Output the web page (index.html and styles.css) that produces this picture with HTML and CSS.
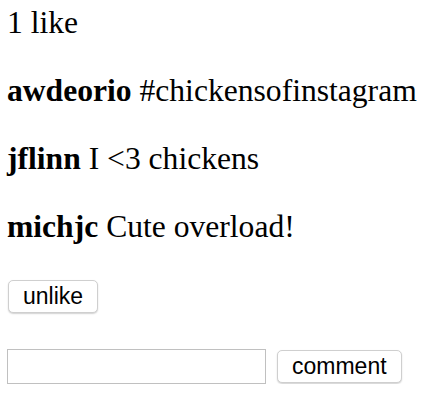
FILE: index.html
```html
<!DOCTYPE html>
<html>
<head>
<meta charset="utf-8">
<link rel="stylesheet" href="styles.css">
</head>
<body>
<div class="post">
  <div class="lines">
    <p class="line">1 like</p>
    <p class="line"><b>awdeorio</b> #chickensofinstagram</p>
    <p class="line"><b>jflinn</b> I &lt;3 chickens</p>
    <p class="line"><b>michjc</b> Cute overload!</p>
  </div>
  <div class="like-row"><button class="btn btn-unlike">unlike</button></div>
  <form class="comment-row">
    <input class="comment-input" type="text">
    <button class="btn btn-comment" type="button">comment</button>
  </form>
</div>
</body>
</html>
```
FILE: styles.css
```css
html, body {
  margin: 0;
  background: #fff;
}
body {
  padding: 4px 7px 0 7px;
  font-family: "Liberation Serif", "Times New Roman", serif;
  color: #000;
}
.post {
  display: flex;
  flex-direction: column;
}
.lines {
  display: flex;
  flex-direction: column;
  gap: 31px;
}
.line {
  margin: 0;
  font-size: 31.6px;
  line-height: 37px;
  white-space: nowrap;
}
.line b {
  font-weight: bold;
}
.like-row {
  margin-top: 35px;
  display: flex;
}
.btn {
  font-family: "Liberation Sans", Arial, sans-serif;
  font-size: 23px;
  color: #000;
  background: #fff;
  border: 1px solid #cfcfcf;
  border-radius: 5px;
  box-shadow: 0 1px 1.5px rgba(0,0,0,0.18);
  height: 33px;
  padding: 0 14px;
  margin: 0;
  line-height: 1;
}
.btn-unlike {
  margin-left: 1px;
}
.comment-row {
  margin: 36px 0 0 0;
  display: flex;
  align-items: center;
  gap: 11px;
}
.comment-input {
  box-sizing: border-box;
  width: 259px;
  height: 35px;
  margin: 0;
  border: 1px solid #c0c0c0;
  border-radius: 0;
  padding: 0 4px;
  font-size: 22px;
  background: #fff;
  outline: none;
}
```
